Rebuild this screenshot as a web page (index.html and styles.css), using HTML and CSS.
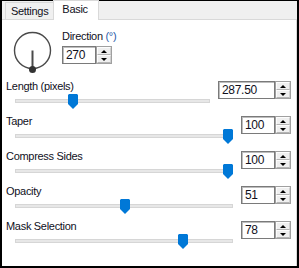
FILE: index.html
```html
<!DOCTYPE html>
<html lang="en">
<head>
    <meta charset="UTF-8">
    <title>Brush Basic</title>
    <link rel="stylesheet" href="styles.css">
</head>
<body>
    <div class="frame">
        <div class="tabs">
            <div class="tab">Settings</div>
            <div class="tab active">Basic</div>
        </div>

        <div class="panel">
            <div class="direction">
                <svg class="dial" width="42" height="46" viewBox="0 0 42 46">
                    <circle cx="20.5" cy="20.5" r="18" fill="none" stroke="#4a4a4a" stroke-width="1.4"/>
                    <line x1="20.5" y1="20.5" x2="20.5" y2="39" stroke="#4a4a4a" stroke-width="2"/>
                    <circle cx="20.5" cy="39.5" r="3.5" fill="#333"/>
                </svg>
                <div class="dir-field">
                    <div class="label">Direction <span class="unit">(°)</span></div>
                    <div class="spin">
                        <div class="box">270</div>
                        <div class="arrows">
                            <div class="arrow up"></div>
                            <div class="arrow down"></div>
                        </div>
                    </div>
                </div>
            </div>

            <div class="row">
                <div class="main">
                    <div class="label">Length (pixels)</div>
                    <div class="slider short">
                        <div class="track"></div>
                        <svg class="thumb" style="left: 53px" width="10" height="15" viewBox="0 0 10 15"><polygon points="0,1 1,0 9,0 10,1 10,10 5,15 0,10" fill="#0078d7"/></svg>
                    </div>
                </div>
                <div class="spin">
                    <div class="box wide">287.50</div>
                    <div class="arrows">
                        <div class="arrow up"></div>
                        <div class="arrow down"></div>
                    </div>
                </div>
            </div>

            <div class="row">
                <div class="main">
                    <div class="label">Taper</div>
                    <div class="slider">
                        <div class="track"></div>
                        <svg class="thumb" style="left: 208px" width="10" height="15" viewBox="0 0 10 15"><polygon points="0,1 1,0 9,0 10,1 10,10 5,15 0,10" fill="#0078d7"/></svg>
                    </div>
                </div>
                <div class="spin">
                    <div class="box">100</div>
                    <div class="arrows">
                        <div class="arrow up"></div>
                        <div class="arrow down"></div>
                    </div>
                </div>
            </div>

            <div class="row">
                <div class="main">
                    <div class="label">Compress Sides</div>
                    <div class="slider">
                        <div class="track"></div>
                        <svg class="thumb" style="left: 208px" width="10" height="15" viewBox="0 0 10 15"><polygon points="0,1 1,0 9,0 10,1 10,10 5,15 0,10" fill="#0078d7"/></svg>
                    </div>
                </div>
                <div class="spin">
                    <div class="box">100</div>
                    <div class="arrows">
                        <div class="arrow up"></div>
                        <div class="arrow down"></div>
                    </div>
                </div>
            </div>

            <div class="row">
                <div class="main">
                    <div class="label">Opacity</div>
                    <div class="slider">
                        <div class="track"></div>
                        <svg class="thumb" style="left: 105px" width="10" height="15" viewBox="0 0 10 15"><polygon points="0,1 1,0 9,0 10,1 10,10 5,15 0,10" fill="#0078d7"/></svg>
                    </div>
                </div>
                <div class="spin">
                    <div class="box">51</div>
                    <div class="arrows">
                        <div class="arrow up"></div>
                        <div class="arrow down"></div>
                    </div>
                </div>
            </div>

            <div class="row">
                <div class="main">
                    <div class="label">Mask Selection</div>
                    <div class="slider">
                        <div class="track"></div>
                        <svg class="thumb" style="left: 163px" width="10" height="15" viewBox="0 0 10 15"><polygon points="0,1 1,0 9,0 10,1 10,10 5,15 0,10" fill="#0078d7"/></svg>
                    </div>
                </div>
                <div class="spin">
                    <div class="box">78</div>
                    <div class="arrows">
                        <div class="arrow up"></div>
                        <div class="arrow down"></div>
                    </div>
                </div>
            </div>
        </div>
    </div>
</body>
</html>
```

FILE: styles.css
```css
body {
    margin: 0;
    background-color: white;
    font-family: "Liberation Sans", Arial, sans-serif;
    font-size: 11px;
    letter-spacing: -0.3px;
    color: #10101c;
}
.frame {
    width: 299px;
    height: 268px;
    box-sizing: border-box;
    border-style: solid;
    border-color: black;
    border-width: 1px 2px 2px 2px;
    display: flex;
    flex-direction: column;
}
.tabs {
    height: 19px;
    flex: none;
    display: flex;
    align-items: flex-end;
    background-color: #f0f0f0;
    border-bottom: 1px solid #d9d9d9;
    box-sizing: border-box;
    position: relative;
}
.tab {
    height: 17px;
    line-height: 16px;
    padding: 0 5px;
    margin-left: 3px;
    border: 1px solid #d9d9d9;
    border-bottom: none;
    background-color: #f0f0f0;
    box-sizing: border-box;
}
.tab.active {
    height: 20px;
    margin-left: -1px;
    margin-bottom: -1px;
    padding: 0 10px 0 8px;
    line-height: 16px;
    background-color: white;
}
.panel {
    flex: 1;
    background-color: white;
    border-right: 1px solid #d9d9d9;
}
.direction {
    height: 60px;
    display: flex;
    align-items: flex-start;
}
.dial {
    margin: 10px 0 0 10px;
}
.dir-field {
    margin: 10px 0 0 8px;
}
.dir-field .spin {
    margin-top: 3px;
}
.label {
    height: 13px;
    line-height: 13px;
    white-space: nowrap;
}
.unit {
    color: #2a5caa;
}
.row {
    height: 35px;
    display: flex;
    align-items: flex-start;
    padding: 0 5px 0 4px;
}
.main {
    flex: 1;
}
.slider {
    position: relative;
    width: 218px;
    height: 16px;
    margin: 1px 0 0 9px;
}
.slider.short {
    width: 195px;
}
.track {
    position: absolute;
    left: 0;
    right: 0;
    top: 5px;
    height: 4px;
    box-sizing: border-box;
    background-color: #e7e7e7;
    border: 1px solid #d6d6d6;
}
.thumb {
    position: absolute;
    top: 0;
    display: block;
}
.spin {
    display: flex;
    margin-top: 1px;
}
.box {
    width: 34px;
    height: 18px;
    box-sizing: border-box;
    border: 1px solid #7a7a7a;
    box-shadow: inset 1px 1px 0 #bdbdbd;
    padding-left: 3px;
    line-height: 16px;
    font-size: 12px;
}
.box.wide {
    width: 57px;
}
.arrows {
    width: 16px;
    height: 18px;
    box-sizing: border-box;
    border: 1px solid #a0a0a0;
    display: flex;
    flex-direction: column;
}
.arrow {
    flex: 1;
    background-color: #efefef;
    border: 1px solid #fdfdfd;
    border-right-color: #d0d0d0;
    border-bottom-color: #b4b4b4;
    display: flex;
    align-items: center;
    justify-content: center;
}
.arrow::after {
    content: "";
    border-left: 3px solid transparent;
    border-right: 3px solid transparent;
}
.arrow.up::after {
    border-bottom: 3px solid black;
}
.arrow.down::after {
    border-top: 3px solid black;
}
```
